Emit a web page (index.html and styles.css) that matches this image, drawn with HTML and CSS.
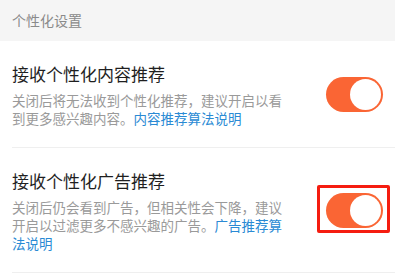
FILE: index.html
```html
<!DOCTYPE html>
<html lang="zh-CN">
<head>
<meta charset="utf-8">
<link rel="stylesheet" href="styles.css">
</head>
<body>
<div class="page">
  <div class="section-header">个性化设置</div>
  <div class="list">
    <div class="item">
      <div class="text">
        <div class="title">接收个性化内容推荐</div>
        <div class="desc">关闭后将无法收到个性化推荐，建议开启以看到更多感兴趣内容。<span class="link">内容推荐算法说明</span></div>
      </div>
      <div class="toggle-wrap">
        <div class="toggle on"><div class="knob"></div></div>
      </div>
    </div>
    <div class="item">
      <div class="text">
        <div class="title">接收个性化广告推荐</div>
        <div class="desc">关闭后仍会看到广告，但相关性会下降，建议开启以过滤更多不感兴趣的广告。<span class="link">广告推荐算法说明</span></div>
      </div>
      <div class="toggle-wrap highlight">
        <div class="toggle on"><div class="knob"></div></div>
      </div>
    </div>
  </div>
</div>
</body>
</html>
```
FILE: styles.css
```css
* { box-sizing: border-box; }
html, body { margin: 0; padding: 0; background: #ffffff; }
body {
  font-family: "Noto Sans CJK SC", "Noto Sans", sans-serif;
  width: 395px;
  height: 279px;
  overflow: hidden;
}
.section-header {
  background: #f5f5f5;
  height: 41px;
  padding: 8px 12px 0;
  font-size: 14px;
  line-height: 24px;
  color: #8a8a8a;
}
.list { background: #fff; }
.item {
  display: flex;
  align-items: center;
  gap: 36px;
  padding: 21px 12px 21px;
  position: relative;
}
.item::after {
  content: "";
  position: absolute;
  left: 12px;
  right: 0;
  bottom: 0;
  height: 1px;
  background: #efefef;
}
.text { flex: 1; min-width: 0; }
.title {
  font-size: 17px;
  line-height: 24px;
  color: #1f1f1f;
}
.desc {
  margin-top: 5px;
  font-size: 13.5px;
  line-height: 18px;
  color: #9a9a9a;
}
.link { color: #2a8ad4; }
.toggle-wrap {
  flex: none;
  position: relative;
}
.toggle {
  width: 57px;
  height: 35px;
  border-radius: 18px;
  background: #fa6534;
  position: relative;
}
.knob {
  position: absolute;
  right: 2px;
  top: 2px;
  width: 31px;
  height: 31px;
  border-radius: 50%;
  background: #fff;
}
.highlight::before {
  content: "";
  position: absolute;
  left: -9px;
  top: -8px;
  right: -7px;
  bottom: -5px;
  border: 3px solid #f51d10;
  border-radius: 2px;
}
```
